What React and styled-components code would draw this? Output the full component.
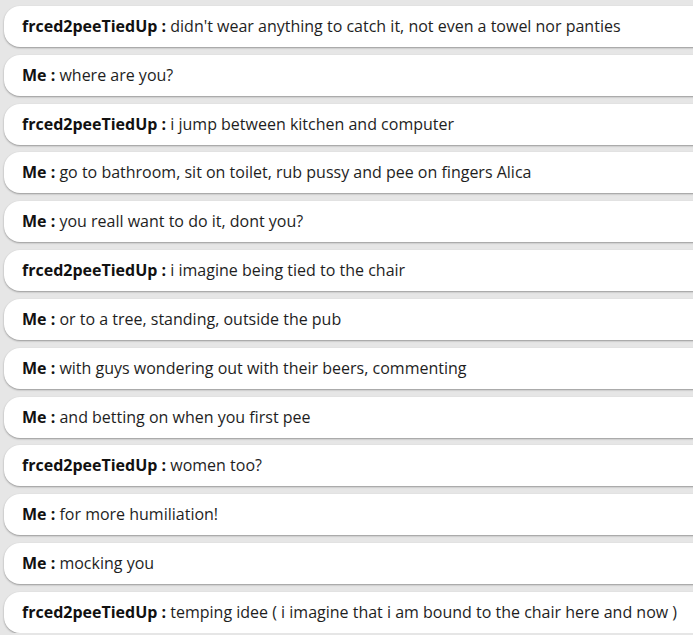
import React from "react";
import styled, { createGlobalStyle } from "styled-components";

const messages = [
  ["frced2peeTiedUp", "didn't wear anything to catch it, not even a towel nor panties"],
  ["Me", "where are you?"],
  ["frced2peeTiedUp", "i jump between kitchen and computer"],
  ["Me", "go to bathroom, sit on toilet, rub pussy and pee on fingers Alica"],
  ["Me", "you reall want to do it, dont you?"],
  ["frced2peeTiedUp", "i imagine being tied to the chair"],
  ["Me", "or to a tree, standing, outside the pub"],
  ["Me", "with guys wondering out with their beers, commenting"],
  ["Me", "and betting on when you first pee"],
  ["frced2peeTiedUp", "women too?"],
  ["Me", "for more humiliation!"],
  ["Me", "mocking you"],
  ["frced2peeTiedUp", "temping idee ( i imagine that i am bound to the chair here and now )"],
];

const GlobalStyle = createGlobalStyle`
  body {
    margin: 0;
    background: #e6e6e6;
    overflow: hidden;
    font-family: "Open Sans", "Liberation Sans", sans-serif;
  }
`;

const Log = styled.div`
  display: flex;
  flex-direction: column;
  gap: 7.83px;
  padding: 6px 0 0 4px;
  overflow: hidden;
`;

const Line = styled.div`
  width: calc(100% + 30px);
  box-sizing: border-box;
  background: #ffffff;
  border-radius: 16px 0 0 16px;
  box-shadow: 0 1px 2px rgba(0, 0, 0, 0.35);
  padding: 9px 18px 10px;
  font-size: 16px;
  line-height: 22px;
  color: #1e1e1e;
  white-space: nowrap;
`;

const Nick = styled.b`
  font-weight: 700;
  color: #111;
`;

export default function App() {
  return (
    <>
      <GlobalStyle />
      <Log>
        {messages.map(([who, text], i) => (
          <Line key={i}>
            <Nick>{who} :</Nick> {text}
          </Line>
        ))}
      </Log>
    </>
  );
}
